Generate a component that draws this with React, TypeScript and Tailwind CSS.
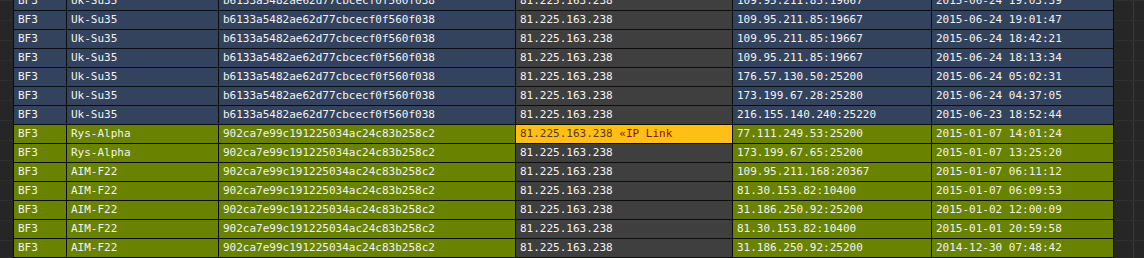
import { memo } from 'react';

type Row = {
  game: string;
  player: string;
  guid: string;
  ip: string;
  server: string;
  time: string;
  group: 'blue' | 'green';
  link?: boolean;
};

const UK_GUID = 'b6133a5482ae62d77cbcecf0f560f038';
const RYS_GUID = '902ca7e99c191225034ac24c83b258c2';
const IP = '81.225.163.238';

const ROWS: Row[] = [
  { game: 'BF3', player: 'Uk-Su35', guid: UK_GUID, ip: IP, server: '109.95.211.85:19667', time: '2015-06-24 19:03:39', group: 'blue' },
  { game: 'BF3', player: 'Uk-Su35', guid: UK_GUID, ip: IP, server: '109.95.211.85:19667', time: '2015-06-24 19:01:47', group: 'blue' },
  { game: 'BF3', player: 'Uk-Su35', guid: UK_GUID, ip: IP, server: '109.95.211.85:19667', time: '2015-06-24 18:42:21', group: 'blue' },
  { game: 'BF3', player: 'Uk-Su35', guid: UK_GUID, ip: IP, server: '109.95.211.85:19667', time: '2015-06-24 18:13:34', group: 'blue' },
  { game: 'BF3', player: 'Uk-Su35', guid: UK_GUID, ip: IP, server: '176.57.130.50:25200', time: '2015-06-24 05:02:31', group: 'blue' },
  { game: 'BF3', player: 'Uk-Su35', guid: UK_GUID, ip: IP, server: '173.199.67.28:25280', time: '2015-06-24 04:37:05', group: 'blue' },
  { game: 'BF3', player: 'Uk-Su35', guid: UK_GUID, ip: IP, server: '216.155.140.240:25220', time: '2015-06-23 18:52:44', group: 'blue' },
  { game: 'BF3', player: 'Rys-Alpha', guid: RYS_GUID, ip: IP, server: '77.111.249.53:25200', time: '2015-01-07 14:01:24', group: 'green', link: true },
  { game: 'BF3', player: 'Rys-Alpha', guid: RYS_GUID, ip: IP, server: '173.199.67.65:25200', time: '2015-01-07 13:25:20', group: 'green' },
  { game: 'BF3', player: 'AIM-F22', guid: RYS_GUID, ip: IP, server: '109.95.211.168:20367', time: '2015-01-07 06:11:12', group: 'green' },
  { game: 'BF3', player: 'AIM-F22', guid: RYS_GUID, ip: IP, server: '81.30.153.82:10400', time: '2015-01-07 06:09:53', group: 'green' },
  { game: 'BF3', player: 'AIM-F22', guid: RYS_GUID, ip: IP, server: '31.186.250.92:25200', time: '2015-01-02 12:00:09', group: 'green' },
  { game: 'BF3', player: 'AIM-F22', guid: RYS_GUID, ip: IP, server: '81.30.153.82:10400', time: '2015-01-01 20:59:58', group: 'green' },
  { game: 'BF3', player: 'AIM-F22', guid: RYS_GUID, ip: IP, server: '31.186.250.92:25200', time: '2014-12-30 07:48:42', group: 'green' },
];

const cell = 'h-[18px] border border-[#0d0d0d] px-[4px] py-0 leading-[18px] whitespace-nowrap overflow-hidden';

const LogRow = memo(function LogRow({ row }: { row: Row }) {
  const rowBg = row.group === 'blue' ? 'bg-[#34435d]' : 'bg-[#698300]';
  return (
    <tr className={rowBg}>
      <td className={cell}>{row.game}</td>
      <td className={cell}>{row.player}</td>
      <td className={cell}>{row.guid}</td>
      {row.link ? (
        <td className={`${cell} bg-[#ffbf16] text-[#5c3c00]`}>
          {row.ip} <span className="text-[#8a0d0d]">«IP Link</span>
        </td>
      ) : (
        <td className={`${cell} bg-[#3f3f3f]`}>{row.ip}</td>
      )}
      <td className={cell}>{row.server}</td>
      <td className={cell}>{row.time}</td>
    </tr>
  );
});

export default function App() {
  return (
    <div className="h-[258px] w-full overflow-hidden bg-[#262626] bg-[linear-gradient(90deg,#262626_1px,transparent_1px),linear-gradient(#383838_1px,transparent_1px),linear-gradient(90deg,#383838_1px,transparent_1px)] bg-[length:2px_2px,20px_20px,15px_20px] bg-[position:0_0,0_0,8px_0]">
      <div className="pl-[13px] mt-[-9px]">
        <table className="table-fixed border-collapse w-[1100px] text-[11px] font-medium text-[#f2f2f2] font-['DejaVu_Sans_Mono',monospace]">
          <colgroup>
            <col className="w-[53px]" />
            <col className="w-[152px]" />
            <col className="w-[297px]" />
            <col className="w-[217px]" />
            <col className="w-[199px]" />
            <col className="w-[182px]" />
          </colgroup>
          <tbody>
            {ROWS.map((row, i) => (
              <LogRow key={i} row={row} />
            ))}
          </tbody>
        </table>
      </div>
    </div>
  );
}
